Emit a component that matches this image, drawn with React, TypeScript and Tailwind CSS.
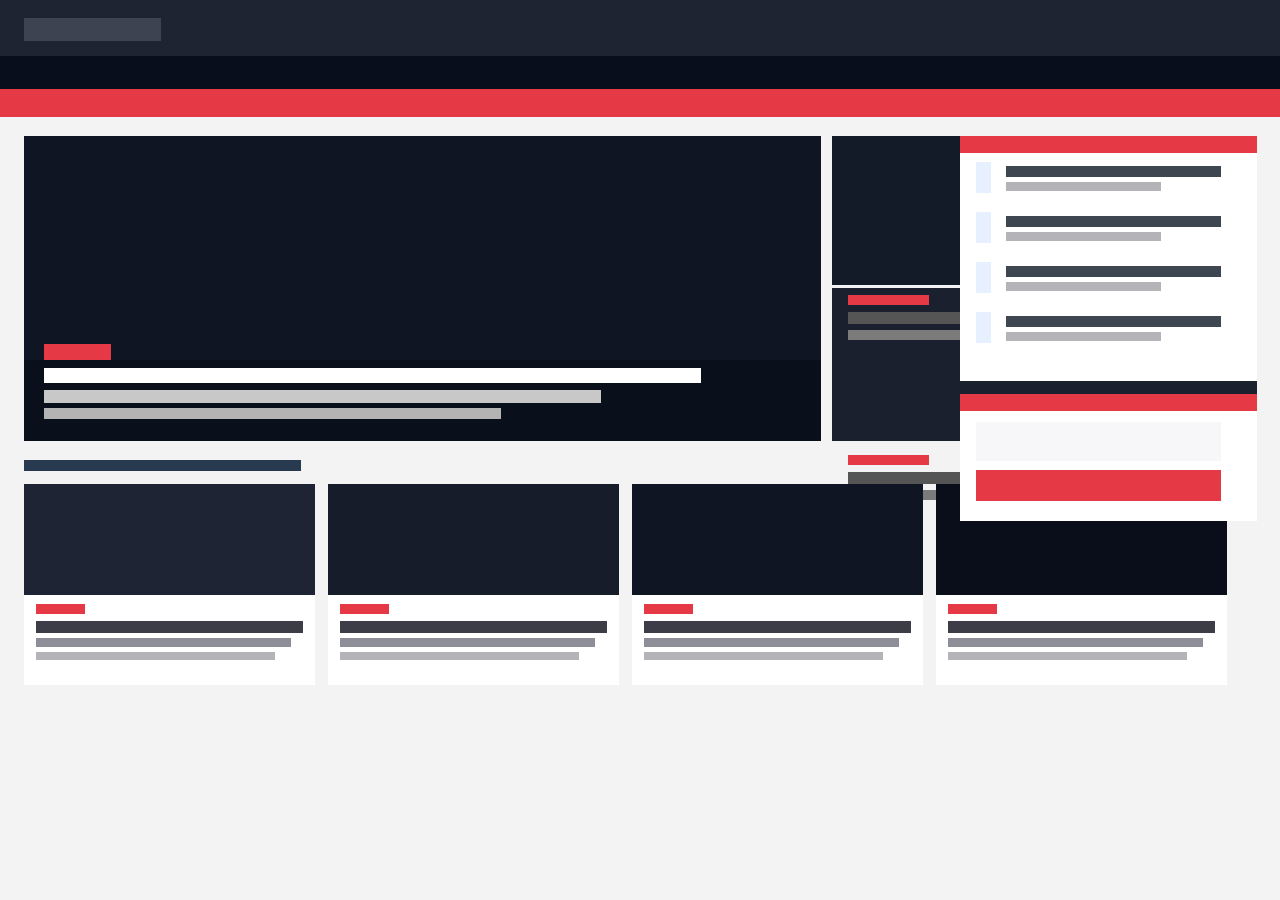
const cards = [
  { id: 1, tone: 'bg-[#1e2433]' },
  { id: 2, tone: 'bg-[#161c2a]' },
  { id: 3, tone: 'bg-[#0f1522]' },
  { id: 4, tone: 'bg-[#0a0d1a]' },
]

function Bar({ className }: { className: string }) {
  return <div className={`shrink-0 ${className}`} />
}

function SideItem() {
  return (
    <div className="flex gap-[15px]">
      <div className="w-[15px] h-[31px] bg-[#e6f0ff] shrink-0" />
      <div className="flex flex-col gap-[5px] pt-1">
        <Bar className="w-[215px] h-[11px] bg-[#3d4651]" />
        <Bar className="w-[155px] h-[9px] bg-[#b4b4b8]" />
      </div>
    </div>
  )
}

function Card({ tone }: { tone: string }) {
  return (
    <div className="bg-white flex flex-col">
      <div className={`h-[111px] ${tone}`} />
      <div className="px-3 pt-[9px] pb-[25px] flex flex-col">
        <Bar className="w-[49px] h-[10px] bg-[#e63946]" />
        <Bar className="mt-[7px] w-full h-[12px] bg-[#3d3d48]" />
        <Bar className="mt-[5px] w-[255px] h-[9px] bg-[#8e8e98]" />
        <Bar className="mt-[5px] w-[239px] h-[8px] bg-[#b4b4b8]" />
      </div>
    </div>
  )
}

export default function App() {
  return (
    <div className="min-h-screen bg-[#f3f3f3] font-['Liberation_Sans',sans-serif]">
      <header className="h-[56px] bg-[#1f2433] px-6 pt-[18px]">
        <div className="w-[137px] h-[23px] bg-[#3d4350]" />
      </header>
      <nav className="h-[33px] bg-[#080e1b]" />
      <div className="h-[28px] bg-[#e63946]" />

      <main className="relative px-6 pt-[19px]">
        <div className="flex gap-[11px] h-[305px]">
          {/* hero */}
          <div className="w-[797px] bg-[#0f1522] flex flex-col justify-end">
            <div className="px-5">
              <Bar className="w-[67px] h-[16px] bg-[#e63946]" />
            </div>
            <div className="bg-[#0a0f1c] px-5 pt-2 pb-[22px] flex flex-col">
              <Bar className="w-[657px] h-[15px] bg-white" />
              <Bar className="mt-[7px] w-[557px] h-[13px] bg-[#c8c8c8]" />
              <Bar className="mt-[5px] w-[457px] h-[11px] bg-[#b4b4b4]" />
            </div>
          </div>

          {/* secondary column */}
          <div className="relative flex-1 flex flex-col gap-[3px]">
            <div className="h-[149px] bg-[#141b28]" />
            <div className="flex-1 bg-[#1a202d] px-4 pt-[7px] flex flex-col">
              <Bar className="w-[81px] h-[10px] bg-[#e63946]" />
              <Bar className="mt-[7px] w-[300px] h-[12px] bg-[#555555]" />
              <Bar className="mt-[6px] w-[260px] h-[10px] bg-[#7b7b7b]" />
            </div>
            <div className="absolute left-4 top-[319px] flex flex-col">
              <Bar className="w-[81px] h-[10px] bg-[#e63946]" />
              <Bar className="mt-[7px] w-[300px] h-[12px] bg-[#555555]" />
              <Bar className="mt-[6px] w-[260px] h-[10px] bg-[#7b7b7b]" />
            </div>
          </div>
        </div>

        <Bar className="mt-[19px] w-[277px] h-[11px] bg-[#283a50]" />

        <div className="relative z-10 mt-[13px] grid grid-cols-[repeat(4,291px)] gap-[13px]">
          {cards.map((c) => (
            <Card key={c.id} tone={c.tone} />
          ))}
        </div>

        {/* sidebar overlay */}
        <aside className="absolute z-20 left-[960px] top-[19px] w-[297px] bg-white flex flex-col">
          <div className="h-[17px] bg-[#e63946]" />
          <div className="px-4 pt-[9px] pb-[38px] flex flex-col gap-[19px]">
            <SideItem />
            <SideItem />
            <SideItem />
            <SideItem />
          </div>
          <div className="h-[13px] bg-[#1a202d]" />
          <div className="h-[17px] bg-[#e63946]" />
          <div className="px-4 pt-[11px] pb-[20px] flex flex-col gap-[9px]">
            <div className="w-[245px] h-[39px] bg-[#f7f7f9]" />
            <div className="w-[245px] h-[31px] bg-[#e63946]" />
          </div>
        </aside>
      </main>
    </div>
  )
}
